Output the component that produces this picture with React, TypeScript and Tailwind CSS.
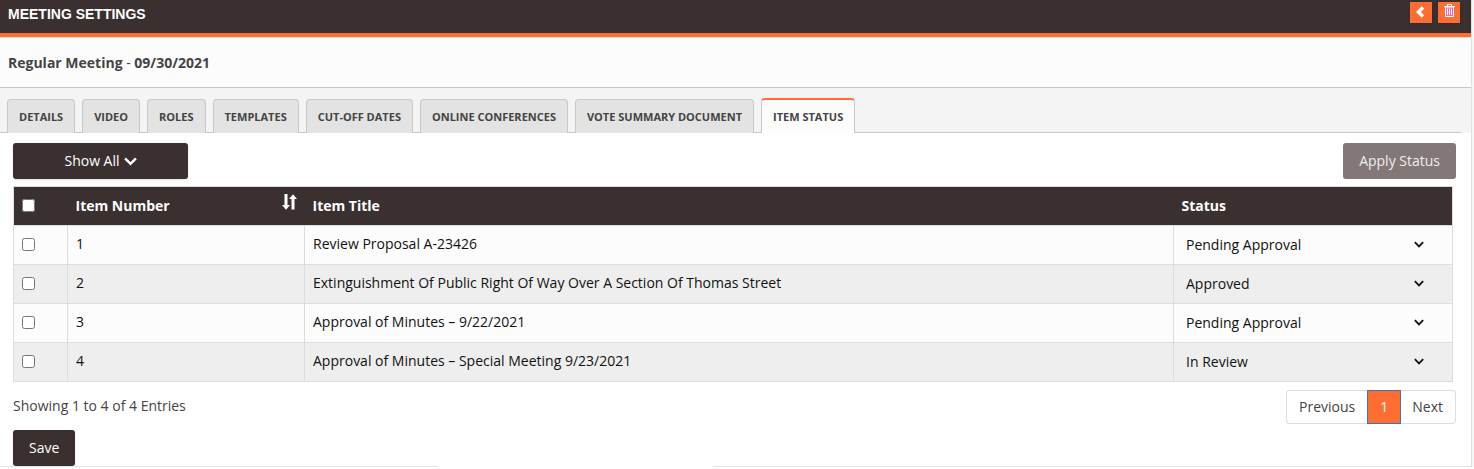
import { useState } from "react";

const tabs = [
  "Details",
  "Video",
  "Roles",
  "Templates",
  "Cut-off Dates",
  "Online Conferences",
  "Vote Summary Document",
  "Item Status",
];

const statuses = ["Pending Approval", "Approved", "In Review"];

const items = [
  { id: 1, title: "Review Proposal A-23426", status: "Pending Approval" },
  { id: 2, title: "Extinguishment Of Public Right Of Way Over A Section Of Thomas Street", status: "Approved" },
  { id: 3, title: "Approval of Minutes – 9/22/2021", status: "Pending Approval" },
  { id: 4, title: "Approval of Minutes – Special Meeting 9/23/2021", status: "In Review" },
];

function ChevronLeft() {
  return (
    <svg width="10" height="12" viewBox="0 0 10 12" fill="none" stroke="#fff" strokeWidth="3.4" aria-hidden="true">
      <path d="M7 1.6 2.4 6 7 10.4" />
    </svg>
  );
}

function Trash() {
  return (
    <svg width="11" height="13" viewBox="0 0 11 13" fill="none" stroke="#fff" aria-hidden="true">
      <path d="M1.5 3h8v9.5h-8z" fill="#ff62b0" />
      <path d="M3.5 2V.5h4V2M0 2.5h11M3.5 4.5V11M5.5 4.5V11M7.5 4.5V11" />
    </svg>
  );
}

function SortArrows() {
  return (
    <svg width="15" height="16" viewBox="0 0 15 16" fill="#fff" aria-hidden="true">
      <path d="M2.5 0h3v11H8l-4 4.8L0 11h2.5zM9.5 15.5h3V5H15L11 .2 7 5h2.5z" />
    </svg>
  );
}

function ChevronDown({ className }: { className: string }) {
  return (
    <svg viewBox="0 0 12 8" fill="none" stroke="currentColor" strokeWidth="2.2" className={className} aria-hidden="true">
      <path d="M1 1.2 6 6.2l5-5" />
    </svg>
  );
}

function TabBar({ active, onSelect }: { active: string; onSelect: (t: string) => void }) {
  return (
    <nav className="bg-[#f4f4f4] pr-[10px] pt-[10px]">
      <div role="tablist" className="flex items-end gap-[7px] border-b border-[#c8c8c8] pl-[7px]">
        {tabs.map((t) => (
          <button
            key={t}
            role="tab"
            aria-selected={t === active}
            onClick={() => onSelect(t)}
            className={
              t === active
                ? "-mb-px h-[35px] whitespace-nowrap rounded-t border border-b-0 border-t-2 border-[#c8c8c8] border-t-[#ff6d33] bg-[#fcfcfc] px-[11px] text-[11px] font-bold uppercase text-[#444]"
                : "-mb-px h-[34px] whitespace-nowrap rounded-t border border-b-0 border-[#c8c8c8] bg-[#e3e3e3] px-[11px] text-[11px] font-bold uppercase text-[#444]"
            }
          >
            {t}
          </button>
        ))}
      </div>
    </nav>
  );
}

export default function App() {
  const [active, setActive] = useState("Item Status");
  const [checked, setChecked] = useState<number[]>([]);
  const toggle = (id: number) =>
    setChecked((c) => (c.includes(id) ? c.filter((x) => x !== id) : [...c, id]));

  return (
    <div className="bg-[#f4f6f6] pr-[2px] font-['Open_Sans',sans-serif] text-[14px] leading-5 text-[#444]">
      <main className="border-r border-[#dfe1e1] bg-white">
        <header className="flex h-[37px] items-start justify-between border-b-4 border-[#ff6d33] bg-[#3a302f] pl-2 pr-[11px] pt-[2px]">
          <h1 className="pt-[2px] font-['Liberation_Sans',sans-serif] text-[14px] font-bold uppercase text-white">
            Meeting Settings
          </h1>
          <div className="flex gap-[6px]">
            <button aria-label="Back" className="flex h-[21px] w-[22px] items-start justify-center bg-[#ff6d33] pt-[4px] shadow">
              <ChevronLeft />
            </button>
            <button aria-label="Delete" className="flex h-[21px] w-[22px] items-start justify-center bg-[#ff6d33] pt-[2px] shadow">
              <Trash />
            </button>
          </div>
        </header>
        <h2 className="border-b border-t border-b-[#c8c8c8] border-t-[#e0e0e0] bg-[#fcfcfc] px-2 pb-[14px] pt-[15px] font-bold">
          Regular Meeting <span className="font-normal">-</span> 09/30/2021
        </h2>
        <TabBar active={active} onSelect={setActive} />

        <section className="pl-[13px] pr-[15px] pt-[10px]">
          <div className="flex justify-between">
            <button className="flex h-9 w-[175px] items-center justify-center gap-1 rounded-[3px] bg-[#3a302f] text-white shadow">
              Show All
              <ChevronDown className="h-[9px] w-[13px]" />
            </button>
            <button className="h-9 rounded-[3px] bg-[#817877] px-4 text-[#f0eeee]">Apply Status</button>
          </div>

          <div className="pr-[3px] pt-[7px]">
            <table className="w-full table-fixed border-collapse border border-[#ddd] text-left text-[#111]">
              <colgroup>
                <col className="w-[54px]" />
                <col className="w-[237px]" />
                <col />
                <col className="w-[279px]" />
              </colgroup>
              <thead>
                <tr className="h-[39px] bg-[#3a302f] font-bold text-white">
                  <th className="px-2 pb-[2px]">
                    <input type="checkbox" aria-label="Select all items" className="block size-[13px]" />
                  </th>
                  <th className="px-2">
                    <div className="flex items-center justify-between">
                      Item Number
                      <button aria-label="Sort by item number" className="pb-2">
                        <SortArrows />
                      </button>
                    </div>
                  </th>
                  <th className="px-2">Item Title</th>
                  <th className="px-2">Status</th>
                </tr>
              </thead>
              <tbody>
                {items.map((item) => (
                  <tr key={item.id} className="h-[39px] odd:bg-[#fcfcfc] even:bg-[#eee]">
                    <td className="border border-[#ddd] px-2 pb-[2px]">
                      <input
                        type="checkbox"
                        aria-label={`Select item ${item.id}`}
                        checked={checked.includes(item.id)}
                        onChange={() => toggle(item.id)}
                        className="block size-[13px]"
                      />
                    </td>
                    <td className="border border-[#ddd] px-2 pb-[2px]">{item.id}</td>
                    <td className="border border-[#ddd] px-2 pb-[2px]">{item.title}</td>
                    <td className="border border-[#ddd] px-2">
                      <div className="relative">
                        <select
                          aria-label={`Status of item ${item.id}`}
                          defaultValue={item.status}
                          className="block w-full appearance-none bg-transparent pl-1 pr-8"
                        >
                          {statuses.map((s) => (
                            <option key={s}>{s}</option>
                          ))}
                        </select>
                        <ChevronDown className="pointer-events-none absolute right-5 top-[6px] h-[7px] w-[10px]" />
                      </div>
                    </td>
                  </tr>
                ))}
              </tbody>
            </table>
          </div>

          <div className="flex items-start justify-between pt-2">
            <p className="pt-[6px]">Showing 1 to 4 of 4 Entries</p>
            <nav aria-label="Pagination" className="flex h-[34px]">
              <button className="rounded-l border border-r-0 border-[#ddd] bg-white px-3">Previous</button>
              <button aria-current="page" className="border border-[#337ab7] bg-[#ff6d33] px-3 text-white">
                1
              </button>
              <button className="rounded-r border border-l-0 border-[#ddd] bg-white pl-[11px] pr-3">Next</button>
            </nav>
          </div>
          <button className="mt-[6px] block h-9 rounded-[3px] bg-[#3a302f] px-4 text-white shadow">Save</button>
        </section>
        <div className="flex justify-between">
          <div className="w-[438px] border-b border-[#e3e3e3]" />
          <div className="ml-[275px] grow border-b border-[#e3e3e3]" />
        </div>
      </main>
    </div>
  );
}
